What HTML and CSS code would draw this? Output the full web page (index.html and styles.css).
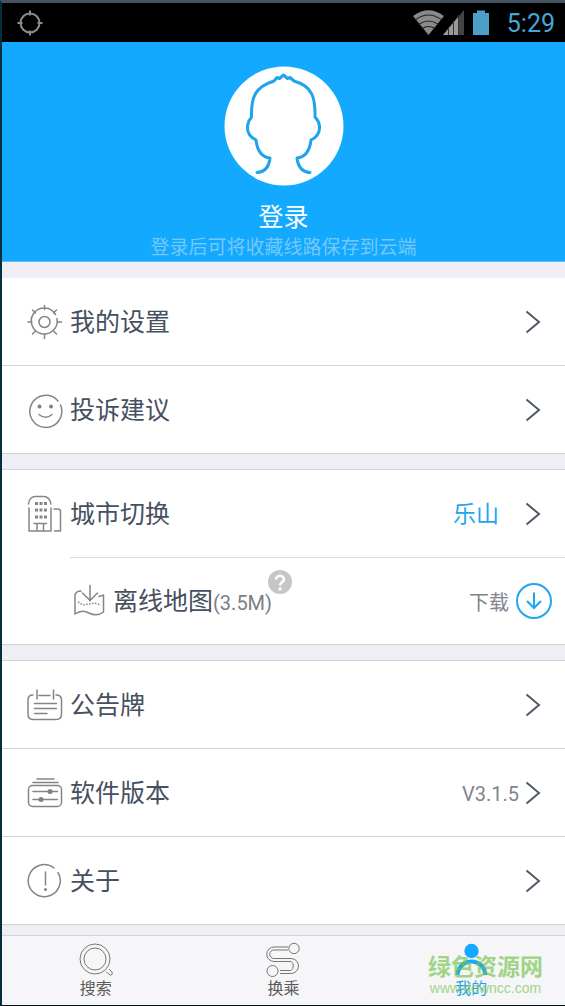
FILE: index.html
```html
<!DOCTYPE html>
<html lang="zh-CN">
<head>
<meta charset="utf-8">
<meta name="viewport" content="width=device-width, initial-scale=1">
<title>我的</title>
<link rel="stylesheet" href="styles.css">
</head>
<body>
<div class="screen">
  <div class="status">
    <svg class="status-gps" width="26" height="26" viewBox="0 0 26 26"><circle cx="13" cy="13" r="9.500"/><path d="M13 0.500v5M13 20.500v5M0.500 13h5M20.500 13h5"/></svg>
    <div class="status-right">
      <svg width="78" height="28" viewBox="0 0 78 28">
        <path d="M0 7Q15.500-4.500 31 7L15.500 26z" fill="#8a8a8a"/>
        <path d="M2 11Q15.500 1 29 11M5.500 15.500Q15.500 8.500 25.500 15.500M9 19.500Q15.500 15.500 22 19.500" fill="none" stroke="#222" stroke-width="1.200"/>
        <path d="M30 26L51 1V26z" fill="#444"/><path d="M30 26L45 8V26z" fill="#999"/>
        <path d="M35.500 18v8M40.500 12v14M45.500 6v20" stroke="#333" stroke-width="1"/>
        <path d="M60 4h4V1.500h8V4h4V26H60z" fill="#4b9fc8"/>
      </svg>
      <span class="clock">5:29</span>
    </div>
  </div>

  <header class="profile">
    <svg class="avatar" width="120" height="120" viewBox="0 0 120 120">
      <circle cx="60" cy="60" r="59.500" fill="#fff"/>
      <path d="M33 106.500C41 106 45 101 46 92C37 91 33 83 32 74C26 71 23 66 23.500 60C24 56 25 54 27.500 51C27 31 31 21 50 15L53 11.500L55.500 12.500L59.500 9L63.500 12.500L66 11.500L70 15C88 20 91.500 31 91 51C94 54 95 56 95.500 60C96 66 93 71 87 74C86 83 82 91 73 92C74 101 79 106 86 106.500"/>
    </svg>
    <button class="login" type="button">登录</button>
    <p class="hint">登录后可将收藏线路保存到云端</p>
  </header>

  <main class="menu">
    <section class="group">
      <button class="row" type="button">
        <svg class="icon" width="36" height="38" viewBox="0 0 36 38"><path d="M28.500 11.500A13 13 0 1 0 30 15.500M17.500 2.500v4M17.500 31.500v4M1 19h4M30 19h4.500M5.500 7l3 3M29.500 7l-3 3M5.500 31l3-3M29.500 31l-3-3"/><circle cx="17.500" cy="19" r="5.500"/></svg>
        <span class="label">我的设置</span>
        <svg class="chevron" width="16" height="24" viewBox="0 0 16 24"><path d="M1.500 1.500L14 12L1.500 22.500"/></svg>
      </button>
      <button class="row" type="button">
        <svg class="icon" width="36" height="38" viewBox="0 0 36 38"><path d="M31 10A16 16 0 1 0 33.500 14M12 23.500Q18.500 29 25 23.500"/><circle class="dot" cx="12.500" cy="15.500" r="2"/><circle class="dot" cx="24" cy="15.500" r="2"/></svg>
        <span class="label">投诉建议</span>
        <svg class="chevron" width="16" height="24" viewBox="0 0 16 24"><path d="M1.500 1.500L14 12L1.500 22.500"/></svg>
      </button>
    </section>

    <section class="group ruled">
      <button class="row row-parent" type="button">
        <svg class="icon" width="36" height="38" viewBox="0 0 36 38"><path d="M1.500 9C2 4 5 1.500 8 1.500H17C20 1.500 23.500 4 24 9M2 13V36H24V13M27 14H31Q33.500 14 33.500 16.500V36H27.500M7 28.500H19.500M10 28.500V36M16.500 28.500V36"/><path class="windows" d="M8 8.500h12M8 15h12M8 22h12"/></svg>
        <span class="label">城市切换</span>
        <span class="city">乐山</span>
        <svg class="chevron" width="16" height="24" viewBox="0 0 16 24"><path d="M1.500 1.500L14 12L1.500 22.500"/></svg>
      </button>
      <div class="row row-sub">
        <svg class="icon" width="32" height="34" viewBox="0 0 32 34"><path d="M7 7Q2 7 1 11V30Q8 25 15 29Q23 33 29.500 28V11L25 12.500M16 1.500V17M8.500 9L16 16.500L23.500 9"/><path class="trail" d="M4 18L9 21L15 20L21 19L27 21"/></svg>
        <span class="label">离线地图<span class="size">(3.5M)</span><button class="help" type="button" aria-label="帮助"><svg width="24" height="24" viewBox="0 0 24 24"><circle cx="12" cy="12" r="12" fill="#c6c6c6"/><path d="M8 9.500C8 4.500 16 4.500 16 9.500C16 12 12 12 12 15.500" fill="none" stroke="#fff" stroke-width="2.500"/><circle cx="12" cy="19" r="1.700" fill="#fff"/></svg></button></span>
        <button class="download" type="button">下载
          <svg width="38" height="38" viewBox="0 0 38 38"><circle cx="19" cy="19" r="17"/><path d="M19 10.500V26M12 19L19 26L26 19"/></svg>
        </button>
      </div>
    </section>

    <section class="group ruled">
      <button class="row" type="button">
        <svg class="icon" width="36" height="38" viewBox="0 0 36 38"><path d="M6 9Q1 9 1 14V28Q1 33.500 6 33.500H29Q34.500 33.500 34.500 28V14Q34.500 9 29 9M12 9.500H23M10 4v9M26.500 4v9M7.500 17.500H29.500M7.500 22.500H29.500M7.500 27.500H20"/></svg>
        <span class="label">公告牌</span>
        <svg class="chevron" width="16" height="24" viewBox="0 0 16 24"><path d="M1.500 1.500L14 12L1.500 22.500"/></svg>
      </button>
      <button class="row" type="button">
        <svg class="icon" width="36" height="38" viewBox="0 0 36 38"><rect x="1.500" y="11.500" width="33" height="21" rx="4"/><path d="M10 5H27M6 8.500H31M6 17.500H30.500M6 25.500H30.500"/><circle class="dot" cx="23" cy="17.500" r="2.500"/><circle class="dot" cx="14" cy="25.500" r="2.500"/></svg>
        <span class="label">软件版本</span>
        <span class="version">V3.1.5</span>
        <svg class="chevron" width="16" height="24" viewBox="0 0 16 24"><path d="M1.500 1.500L14 12L1.500 22.500"/></svg>
      </button>
      <button class="row" type="button">
        <svg class="icon" width="36" height="38" viewBox="0 0 36 38"><path d="M27 6A16 16 0 1 0 31 10.500M18.500 10V23"/><circle class="dot" cx="18.500" cy="27.500" r="1.500"/></svg>
        <span class="label">关于</span>
        <svg class="chevron" width="16" height="24" viewBox="0 0 16 24"><path d="M1.500 1.500L14 12L1.500 22.500"/></svg>
      </button>
    </section>
  </main>

  <nav class="tabs">
    <a class="tab" href="#search">
      <svg width="36" height="36" viewBox="0 0 36 36"><circle cx="17" cy="17" r="15"/><circle cx="17" cy="17" r="11"/><path d="M28 29.500L30.500 32Q32.500 34 34 32.500Q35 31 33.500 29.500L31 27"/></svg>
      搜索
    </a>
    <a class="tab" href="#transfer">
      <svg width="36" height="36" viewBox="0 0 36 36"><circle cx="29" cy="6.500" r="5.200"/><circle cx="7.500" cy="29" r="5.500"/><path d="M23 5H9A7.200 7.200 0 0 0 9 19.500H26A5.500 5.500 0 0 1 26 28.500H15M23 8H9A4.200 4.200 0 0 0 9 16.500H26A7.500 7.500 0 0 1 26 31.500H15"/></svg>
      换乘
    </a>
    <a class="tab active" href="#me">
      <svg width="36" height="36" viewBox="0 0 36 36"><circle class="head" cx="18.500" cy="9" r="7.200"/><path class="body" d="M4.500 33C6 15 31 15 32.500 33"/></svg>
      我的
    </a>
    <div class="watermark"><strong>绿色资源网</strong><span>www.downcc.com</span></div>
  </nav>
</div>
</body>
</html>
```
FILE: styles.css
```css
* { box-sizing: border-box; }

body {
  margin: 0;
  font-family: Roboto, "Noto Sans CJK SC", sans-serif;
  color: #465060;
  background: #eeeef4;
}

button {
  margin: 0;
  padding: 0;
  border: 0;
  background: none;
  color: inherit;
  font: inherit;
  cursor: pointer;
}

svg { display: block; flex: none; }

.screen {
  display: flex;
  flex-direction: column;
  min-height: 100vh;
  border-style: solid;
  border-width: 3px 0 1px 2px;
  border-color: #455260 #031018 #031018 #02303f;
}

.status {
  display: flex;
  align-items: center;
  justify-content: space-between;
  height: 39px;
  padding: 0 10px 0 15px;
  background: #000;
}

.status-gps { fill: none; stroke: #8c8c8c; stroke-width: 2; }
.status-right { display: flex; align-items: center; gap: 16px; }
.clock { padding-top: 2px; font-size: 25px; line-height: 37px; color: #42a8d8; }

.profile {
  display: flex;
  flex-direction: column;
  align-items: center;
  height: 220px;
  padding-top: 24px;
  background: #12a9ff;
  border-bottom: 1px solid #5fbdf5;
}

.avatar path {
  fill: none;
  stroke: #1ea4ea;
  stroke-width: 3;
  stroke-linecap: round;
  stroke-linejoin: round;
}

.login {
  margin-top: 14px;
  font-size: 25px;
  line-height: 36px;
  color: #fff;
}

.hint {
  margin: 0;
  font-size: 19px;
  line-height: 24px;
  color: #76c8fa;
}

.menu {
  display: flex;
  flex-direction: column;
  flex: 1;
  gap: 15px;
  padding: 16px 0 10px;
}

.group {
  background: #fff;
  border-bottom: 1px solid #d2d3d7;
}

.ruled { border-top: 1px solid #d2d3d7; }

.row {
  display: flex;
  align-items: center;
  width: 100%;
  height: 88px;
  padding: 0 24px 0 25px;
  border-bottom: 1px solid #d2d3d7;
  text-align: left;
}

.row:last-child {
  height: 87px;
  border-bottom: 0;
}

.row-parent {
  height: 87px;
  border-bottom: 0;
}

.row-sub {
  width: auto;
  margin-left: 68px;
  padding: 0 12px 0 4px;
  border-top: 1px solid #d9dadd;
}

.icon {
  fill: none;
  stroke: #858585;
  stroke-width: 1.500;
  stroke-linecap: round;
  stroke-linejoin: round;
}

.icon .dot { fill: #808080; stroke: none; }
.icon .windows { stroke-width: 3; stroke-linecap: butt; stroke-dasharray: 3 1.500; }
.icon .trail { stroke-linecap: butt; stroke-dasharray: 1.500 1.500; }

.label {
  position: relative;
  flex: 1;
  margin-left: 7px;
  padding-top: 3px;
  font-size: 25px;
  line-height: 36px;
}

.row-sub .label { flex: none; margin-right: auto; }
.size { font-size: 20px; color: #7a7e87; }

.help {
  position: absolute;
  top: -11px;
  right: -20px;
}

.city {
  margin-right: 26px;
  padding-bottom: 4px;
  font-size: 23px;
  color: #1fa6ee;
}

.version {
  margin-right: 6px;
  padding-top: 2px;
  font-size: 20px;
  color: #80848d;
}

.download {
  display: flex;
  align-items: center;
  gap: 6px;
  font-size: 20px;
  color: #80848d;
}

.download svg { fill: none; stroke: #1fa6ee; stroke-width: 2; }
.chevron { fill: none; stroke: #505968; stroke-width: 2; }

.tabs {
  position: relative;
  display: grid;
  grid-template-columns: repeat(3, 1fr);
  height: 70px;
  border-top: 1px solid #d2d3d7;
  background: #f6f6f9;
}

.tab {
  display: flex;
  flex-direction: column;
  align-items: center;
  padding-top: 6px;
  font-size: 16px;
  line-height: 22px;
  color: #5b5b5b;
  text-decoration: none;
}

.tab svg { fill: none; stroke: #777; stroke-width: 1; }
.tab.active { color: #1fa6ee; }
.tab .head { fill: #12a9ff; stroke: none; }
.tab .body { stroke: #12a9ff; stroke-width: 4; }

.watermark {
  position: absolute;
  right: 22px;
  bottom: 9px;
  display: flex;
  flex-direction: column;
  align-items: center;
  color: #74c34a;
  opacity: 0.65;
  pointer-events: none;
}

.watermark strong { font-size: 23px; line-height: 24px; }
.watermark span { font: 14px/16px "Liberation Sans", sans-serif; }
```
